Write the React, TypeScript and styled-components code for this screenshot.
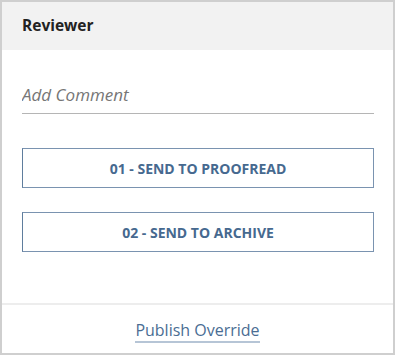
import React, { useState } from 'react';
import styled, { createGlobalStyle } from 'styled-components';

const GlobalStyle = createGlobalStyle`
    html, body {
        margin: 0;
        padding: 0;
        background: #ffffff;
    }

    body {
        font-family: 'Open Sans', 'Noto Sans', sans-serif;
    }
`;

const Panel = styled.section`
    box-sizing: border-box;
    display: flex;
    flex-direction: column;

    width: 395px;
    height: 355px;
    border: 2px solid #cfcfcf;
    background: #ffffff;
`;

const Header = styled.header`
    display: flex;
    align-items: center;

    height: 48px;
    padding: 0 20px 2px;
    box-sizing: border-box;
    background: #f2f2f2;
`;

const Title = styled.h2`
    margin: 0;
    font-size: 15.5px;
    font-weight: 700;
    color: #222222;
`;

const Body = styled.div`
    display: flex;
    flex-direction: column;

    flex: 1;
    padding: 28px 19px 0 20px;
`;

const CommentInput = styled.input`
    box-sizing: border-box;
    width: 100%;
    height: 36px;
    padding: 0 0 3px;
    margin-bottom: 34px;

    border: none;
    border-bottom: 1px solid #b5b5b5;
    outline: none;
    background: transparent;

    font-family: inherit;
    font-size: 17px;
    color: #333333;

    &::placeholder {
        font-style: italic;
        color: #767676;
    }
`;

const Actions = styled.div`
    display: flex;
    flex-direction: column;
    gap: 24px;
`;

const ActionButton = styled.button`
    box-sizing: border-box;
    height: 40px;
    width: 100%;

    border: 1px solid #7a93b0;
    border-left-color: #5f7d9d;
    background: #ffffff;
    cursor: pointer;

    font-family: inherit;
    font-size: 14px;
    font-weight: 700;
    color: #46698f;
`;

const Footer = styled.footer`
    display: flex;
    justify-content: center;

    height: 50px;
    padding-top: 14px;
    box-sizing: border-box;
    border-top: 2px solid #ededed;
`;

const OverrideLink = styled.a`
    height: 22px;
    font-size: 16px;
    color: #4a6d93;
    text-decoration: none;
    border-bottom: 2px solid #b6c5d6;
    cursor: pointer;
`;

const actions = ['01 - SEND TO PROOFREAD', '02 - SEND TO ARCHIVE'];

export default function App() {
    const [comment, setComment] = useState('');

    return (
        <>
            <GlobalStyle />
            <Panel>
                <Header>
                    <Title>Reviewer</Title>
                </Header>

                <Body>
                    <CommentInput
                        placeholder="Add Comment"
                        value={comment}
                        onChange={(e) => setComment(e.target.value)}
                    />

                    <Actions>
                        {actions.map((label) => (
                            <ActionButton key={label}>{label}</ActionButton>
                        ))}
                    </Actions>
                </Body>

                <Footer>
                    <OverrideLink>Publish Override</OverrideLink>
                </Footer>
            </Panel>
        </>
    );
}
